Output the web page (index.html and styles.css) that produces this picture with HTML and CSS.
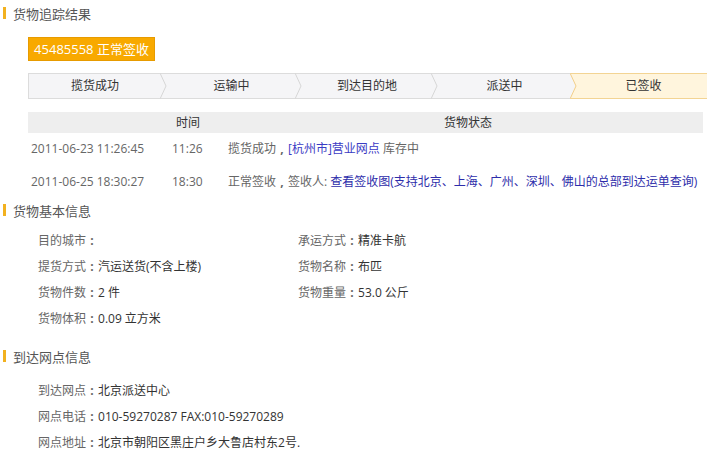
FILE: index.html
```html
<!DOCTYPE html>
<html lang="zh-CN">
<head>
<meta charset="utf-8">
<title>货物追踪结果</title>
<link rel="stylesheet" href="styles.css">
</head>
<body>
<div class="page">
  <div class="sec-title"><span class="bar"></span>货物追踪结果</div>
  <div class="track">
    <div class="badge">45485558 正常签收</div>
    <div class="steps">
      <div class="step s1">揽货成功<svg class="arrow" viewBox="0 0 7 26" width="7" height="26"><polygon points="0,0 6,13 0,26" fill="#f5f5f7"/><polyline points="0,0 6,13 0,26" fill="none" stroke="#d6d6d6" stroke-width="1"/></svg></div>
      <div class="step s2">运输中<svg class="arrow" viewBox="0 0 7 26" width="7" height="26"><polygon points="0,0 6,13 0,26" fill="#f5f5f7"/><polyline points="0,0 6,13 0,26" fill="none" stroke="#d6d6d6" stroke-width="1"/></svg></div>
      <div class="step s3">到达目的地<svg class="arrow" viewBox="0 0 7 26" width="7" height="26"><polygon points="0,0 6,13 0,26" fill="#f5f5f7"/><polyline points="0,0 6,13 0,26" fill="none" stroke="#d6d6d6" stroke-width="1"/></svg></div>
      <div class="step s4">派送中<svg class="arrow" viewBox="0 0 7 26" width="7" height="26"><polygon points="0,0 6,13 0,26" fill="#f5f5f7"/><polyline points="0,0 6,13 0,26" fill="none" stroke="#f2cf8a" stroke-width="1"/></svg></div>
      <div class="step s5 current">已签收</div>
    </div>
    <div class="thead">
      <div class="th th-time">时间</div>
      <div class="th th-status">货物状态</div>
    </div>
    <div class="row r1">
      <div class="c-dt">2011-06-23 11:26:45</div>
      <div class="c-t">11:26</div>
      <div class="c-s">揽货成功<span class="punct">,</span><a class="lnk">[杭州市]营业网点</a> 库存中</div>
    </div>
    <div class="row">
      <div class="c-dt">2011-06-25 18:30:27</div>
      <div class="c-t">18:30</div>
      <div class="c-s">正常签收<span class="punct">,</span>签收人: <a class="lnk dark">查看签收图(支持北京、上海、广州、深圳、佛山的总部到达运单查询)</a></div>
    </div>
  </div>

  <div class="sec-title t2"><span class="bar"></span>货物基本信息</div>
  <div class="info">
    <div class="item">目的城市<span class="punct">:</span></div>
    <div class="item">承运方式<span class="punct">:</span><span class="val">精准卡航</span></div>
    <div class="item">提货方式<span class="punct">:</span><span class="val">汽运送货(不含上楼)</span></div>
    <div class="item">货物名称<span class="punct">:</span><span class="val">布匹</span></div>
    <div class="item">货物件数<span class="punct">:</span><span class="val">2 件</span></div>
    <div class="item">货物重量<span class="punct">:</span><span class="val">53.0 公斤</span></div>
    <div class="item">货物体积<span class="punct">:</span><span class="val">0.09 立方米</span></div>
  </div>

  <div class="sec-title t3"><span class="bar"></span>到达网点信息</div>
  <div class="info one">
    <div class="item">到达网点<span class="punct">:</span><span class="val">北京派送中心</span></div>
    <div class="item">网点电话<span class="punct">:</span><span class="val">010-59270287 FAX:010-59270289</span></div>
    <div class="item">网点地址<span class="punct">:</span><span class="val">北京市朝阳区黑庄户乡大鲁店村东2号.</span></div>
  </div>
</div>
</body>
</html>
```

FILE: styles.css
```css
html, body {
  margin: 0;
  padding: 0;
  overflow: hidden;
  background: #fff;
}
body {
  font-family: "Open Sans", "Noto Sans CJK SC", sans-serif;
  font-size: 12px;
  color: #666;
}
.page {
  padding: 5px 0 0 3px;
}
.sec-title {
  display: flex;
  align-items: center;
  height: 16px;
  font-size: 13px;
  color: #555;
}
.sec-title .bar {
  width: 3px;
  height: 12px;
  background: #f2b11f;
  margin-right: 7px;
}
.punct {
  display: inline-block;
  width: 12px;
  text-align: center;
  font-weight: bold;
}
.track {
  margin-left: 25px;
  width: 675px;
}
.badge {
  margin-top: 16px;
  display: inline-block;
  box-sizing: border-box;
  width: 127px;
  height: 24px;
  line-height: 22px;
  text-align: center;
  background: #f8a900;
  border: 1px solid #e79b00;
  color: #fff;
  font-size: 13px;
}
.steps {
  margin-top: 12px;
  display: flex;
  width: 684px;
  height: 26px;
  box-sizing: border-box;
  border: 1px solid #dcdcdc;
  border-right: none;
  background: #f5f5f7;
}
.step {
  position: relative;
  height: 24px;
  line-height: 24px;
  text-align: center;
  color: #333;
  box-sizing: border-box;
}
.s1 { width: 132px; }
.s2 { width: 135px; padding-left: 6px; }
.s3 { width: 136px; padding-left: 6px; }
.s4 { width: 139px; padding-left: 6px; }
.s5 { flex: 1; padding-left: 4px; }
.step .arrow {
  position: absolute;
  right: -6px;
  top: -1px;
  z-index: 1;
}
.step.current {
  background: #fff5dd;
  margin-top: -1px;
  height: 26px;
  border-top: 1px solid #f3d493;
  border-bottom: 1px solid #f3d493;
  line-height: 24px;
}
.thead {
  margin-top: 13px;
  display: flex;
  height: 21px;
  line-height: 21px;
  background: #eeeeee;
  color: #333;
}
.th { text-align: center; }
.th-time { width: 320px; }
.th-status { width: 240px; }
.row {
  display: flex;
  height: 33px;
  line-height: 33px;
  white-space: nowrap;
}
.row.r1 { height: 32px; line-height: 31px; }
.c-dt { width: 141px; padding-left: 3px; }
.c-t { width: 56px; }
.c-s { flex: 1; }
.lnk { color: #3b3bc4; }
.lnk.dark { color: #2d2daa; }
.t2 { margin-top: 4px; }
.t3 { margin-top: 16px; }
.info {
  margin-top: 10px;
  padding-left: 35px;
  display: grid;
  grid-template-columns: 260px 260px;
}
.info.one {
  margin-top: 13px;
  grid-template-columns: 400px;
}
.info.one .item { line-height: 28px; }
.item {
  height: 26px;
  line-height: 26px;
  white-space: nowrap;
}
.val { color: #333; }
```
